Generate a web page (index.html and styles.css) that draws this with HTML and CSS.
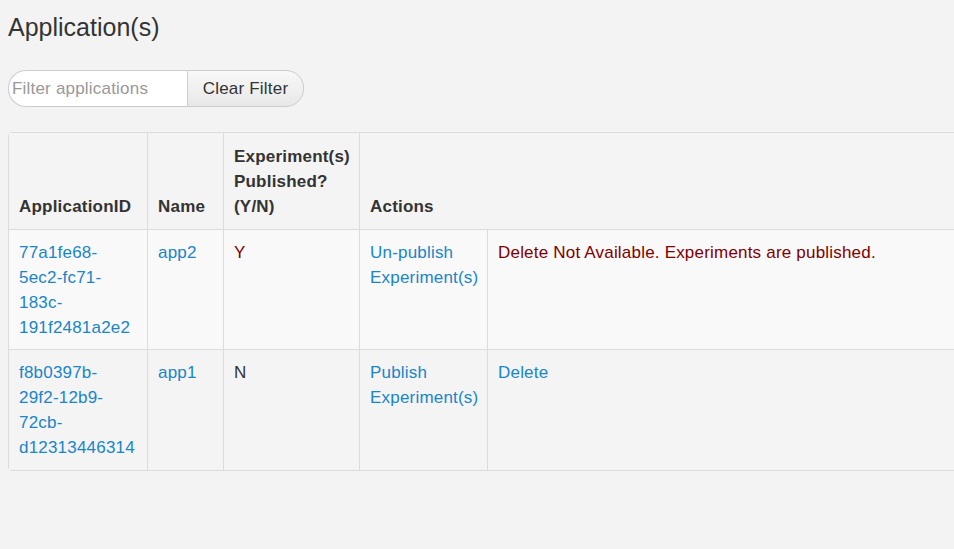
FILE: index.html
```html
<!DOCTYPE html>
<html>
<head>
<meta charset="utf-8">
<link rel="stylesheet" href="styles.css">
</head>
<body>
<div class="page">
  <h1 class="title">Application(s)</h1>
  <div class="filter">
    <input class="filter-input" type="text" placeholder="Filter applications">
    <button class="filter-btn">Clear Filter</button>
  </div>
  <div class="table-wrap">
    <table class="apps">
      <colgroup>
        <col class="c1"><col class="c2"><col class="c3"><col class="c4"><col class="c5">
      </colgroup>
      <thead>
        <tr>
          <th>ApplicationID</th>
          <th>Name</th>
          <th>Experiment(s) Published? (Y/N)</th>
          <th colspan="2">Actions</th>
        </tr>
      </thead>
      <tbody>
        <tr class="odd">
          <td><a href="#">77a1fe68-<br>5ec2-fc71-<br>183c-<br>191f2481a2e2</a></td>
          <td><a href="#">app2</a></td>
          <td class="warn">Y</td>
          <td><a href="#">Un-publish Experiment(s)</a></td>
          <td class="warn">Delete Not Available. Experiments are published.</td>
        </tr>
        <tr class="even">
          <td><a href="#">f8b0397b-<br>29f2-12b9-<br>72cb-<br>d12313446314</a></td>
          <td><a href="#">app1</a></td>
          <td>N</td>
          <td><a href="#">Publish Experiment(s)</a></td>
          <td><a href="#">Delete</a></td>
        </tr>
      </tbody>
    </table>
  </div>
</div>
</body>
</html>
```

FILE: styles.css
```css
html, body {
  margin: 0;
  padding: 0;
  background: #f3f3f3;
  overflow: hidden;
}
body {
  font-family: "Helvetica Neue", "Liberation Sans", Arial, sans-serif;
  font-size: 17px;
  letter-spacing: 0.2px;
  color: #333;
}
.page {
  padding: 0 0 0 8px;
}
.title {
  margin: 0;
  padding-top: 12px;
  font-size: 25px;
  line-height: 30px;
  font-weight: normal;
  letter-spacing: 0;
  color: #333;
}
.filter {
  display: flex;
  margin-top: 28px;
  height: 36px;
  width: 296px;
}
.filter-input {
  box-sizing: border-box;
  width: 179px;
  height: 37px;
  margin: 0;
  padding: 0 3px;
  border: 1px solid #ccc;
  border-right: none;
  border-radius: 18px 0 0 18px;
  background: #fff;
  font-family: inherit;
  font-size: 17px;
  letter-spacing: 0.2px;
  color: #555;
  outline: none;
}
.filter-input::placeholder {
  color: #999;
}
.filter-btn {
  box-sizing: border-box;
  width: 117px;
  height: 37px;
  margin: 0;
  padding: 0;
  border: 1px solid #ccc;
  border-radius: 0 18px 18px 0;
  background: linear-gradient(#f8f8f8, #e8e8e8);
  font-family: inherit;
  font-size: 17px;
  letter-spacing: 0.2px;
  color: #333;
}
.table-wrap {
  margin-top: 26px;
  width: 1000px;
}
.apps {
  width: 1000px;
  table-layout: fixed;
  border-collapse: separate;
  border-spacing: 0;
  border: 1px solid #dcdcdc;
  border-radius: 4px;
  line-height: 25px;
}
.c1 { width: 138px; }
.c2 { width: 76px; }
.c3 { width: 136px; }
.c4 { width: 128px; }
.apps th, .apps td {
  padding: 10px 10px;
  text-align: left;
  vertical-align: top;
  border-left: 1px solid #dcdcdc;
  border-top: 1px solid #dcdcdc;
}
.apps th:first-child, .apps td:first-child {
  border-left: none;
}
.apps th {
  border-top: none;
  font-weight: bold;
  vertical-align: bottom;
  background: #f4f4f4;
  padding-top: 11px;
  padding-bottom: 10px;
}
.apps tr.odd td { background: #f9f9f9; padding-bottom: 9px; }
.apps tr.even td { background: #f4f4f4; }
.apps a {
  color: #1a85c8;
  text-decoration: none;
}
.warn {
  color: #7d0000;
}
```
